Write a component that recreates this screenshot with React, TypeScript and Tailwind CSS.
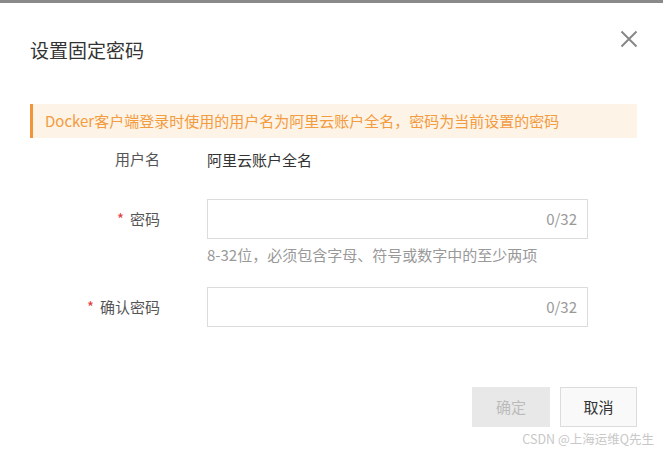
import React from "react";

const font = "font-['Noto_Sans_CJK_SC','Noto_Sans',sans-serif]";

const FormRow: React.FC<{ label: string; required?: boolean; children: React.ReactNode }> = ({
  label,
  required,
  children,
}) => {
  return (
    <div className="flex items-center">
      <div className="w-[130px] text-right text-[15px] text-[#555] leading-[22px]">
        {required && <span className="text-[#e4393c] mr-[6px]">*</span>}
        {label}
      </div>
      <div className="ml-[47px]">{children}</div>
    </div>
  );
};

const CountInput: React.FC = () => (
  <div className="w-[381px] h-[40px] border border-[#dcdcdc] flex items-center justify-end pr-[10px]">
    <span className="text-[15px] text-[#999]">0/32</span>
  </div>
);

export default function App() {
  return (
    <div className={`w-[663px] h-[453px] bg-white relative overflow-hidden ${font}`}>
      <div className="h-[3px] bg-[#8a8a8a]" />
      <div className="pl-[30px] pr-[26px]">
        {/* header */}
        <div className="flex items-start justify-between pt-[33px]">
          <h2 className="text-[19px] leading-[28px] text-[#333]">设置固定密码</h2>
          <button className="mt-[-6px] mr-[-1px] text-[#888]">
            <svg width="18" height="18" viewBox="0 0 18 18" fill="none" stroke="currentColor" strokeWidth="2">
              <path d="M1.5 1.5L16.5 16.5M16.5 1.5L1.5 16.5" />
            </svg>
          </button>
        </div>

        {/* notice */}
        <div className="mt-[40px] h-[34px] bg-[#fdf3e6] border-l-[3px] border-[#f0953a] flex items-center pl-3">
          <span className="text-[15px] text-[#f39b3f]">
            Docker客户端登录时使用的用户名为阿里云账户全名，密码为当前设置的密码
          </span>
        </div>

        <div className="mt-[9px]">
          <FormRow label="用户名">
            <span className="text-[15px] leading-[22px] text-[#333]">阿里云账户全名</span>
          </FormRow>
        </div>

        <div className="mt-[28px]">
          <FormRow label="密码" required>
            <CountInput />
          </FormRow>
        </div>
        <div className="mt-[5px] ml-[177px] text-[15px] leading-[22px] text-[#999]">
          8-32位，必须包含字母、符号或数字中的至少两项
        </div>

        <div className="mt-[21px]">
          <FormRow label="确认密码" required>
            <CountInput />
          </FormRow>
        </div>

        {/* footer */}
        <div className="mt-[60px] flex justify-end gap-[10px]">
          <button className="w-[78px] h-[40px] bg-[#e8e8e8] text-[15px] text-[#bbb]">确定</button>
          <button className="w-[77px] h-[40px] bg-[#f9f9f9] border border-[#dcdcdc] text-[15px] text-[#333]">
            取消
          </button>
        </div>
      </div>

      <div className="absolute right-[9px] bottom-[6px] text-[12.5px] leading-[16px] text-[#c8c8c8]">
        CSDN @上海运维Q先生
      </div>
    </div>
  );
}
